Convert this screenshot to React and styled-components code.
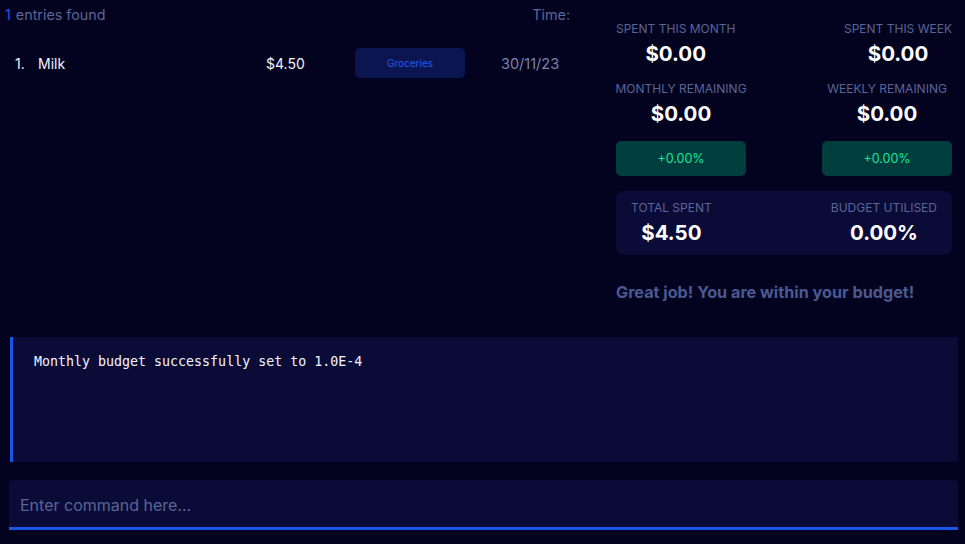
import React from "react";
import styled, { createGlobalStyle } from "styled-components";

const GlobalStyle = createGlobalStyle`
    html, body {
        margin: 0;
        padding: 0;
        background-color: #03031f;
        font-family: Inter, "Noto Sans", sans-serif;
    }
`

const Page = styled.div`
    display: flex;
    flex-direction: column;
    height: 544px;
    width: 965px;
    background-color: #03031f;
    overflow: hidden;
`

const Top = styled.div`
    display: flex;
    height: 337px;
`

/* left list */
const ListPanel = styled.div`
    width: 616px;
    display: flex;
    flex-direction: column;
`

const ListHeader = styled.div`
    display: flex;
    justify-content: space-between;
    width: 565px;
    padding: 5px 0 0 5px;
    font-size: 14.3px;
    line-height: 20px;
    color: #5a6597;
`

const Count = styled.span`
    color: #1f55e0;
    margin-right: 1px;
`

const Row = styled.div`
    display: flex;
    align-items: center;
    height: 30px;
    margin-top: 23px;
    padding-left: 15px;
    font-size: 14px;
    color: #f2f2ff;
`

const Index = styled.div`
    width: 23px;
`

const Name = styled.div`
    width: 228px;
`

const Price = styled.div`
    width: 89px;
`

const Tag = styled.div`
    width: 110px;
    height: 30px;
    display: flex;
    align-items: center;
    justify-content: center;
    border-radius: 5px;
    background-color: #0b1650;
    color: #2459e8;
    font-size: 10px;
`

const Date = styled.div`
    margin-left: 36px;
    color: #7a82ad;
    font-size: 14.5px;
`

/* right stats */
const StatsPanel = styled.div`
    width: 336px;
    padding-top: 21px;
    display: flex;
    flex-direction: column;
`

const StatRow = styled.div`
    display: flex;
    justify-content: space-between;
    margin-top: ${(p) => p.gap || 0}px;
`

const Stat = styled.div`
    display: flex;
    flex-direction: column;
    align-items: center;
    width: ${(p) => (p.w ? p.w + "px" : "auto")};
`

const Label = styled.div`
    font-size: 12px;
    line-height: 16px;
    color: #5a6597;
    text-transform: uppercase;
    white-space: nowrap;
`

const Value = styled.div`
    font-size: 20.5px;
    line-height: 24px;
    font-weight: 700;
    color: #ffffff;
    margin-top: 5px;
`

const Change = styled.div`
    width: 130px;
    height: 35px;
    display: flex;
    align-items: center;
    justify-content: center;
    border-radius: 5px;
    background-color: #003d3d;
    color: #19e39a;
    font-size: 12.5px;
`

const TotalBox = styled.div`
    display: flex;
    justify-content: space-between;
    margin-top: 15px;
    padding: 9px 15px 10px 15px;
    border-radius: 8px;
    background-color: #0b0b38;
`

const Praise = styled.div`
    margin-top: 26px;
    font-size: 16.2px;
    line-height: 22px;
    font-weight: 700;
    color: #4b5993;
`

/* bottom */
const ResultBox = styled.div`
    margin: 0 7px 0 10px;
    height: 125px;
    box-sizing: border-box;
    border-left: 3px solid #1a55e6;
    background-color: #0b0b38;
    padding: 16px 0 0 21px;
    font-family: "DejaVu Sans Mono", "Liberation Mono", monospace;
    font-size: 13.3px;
    line-height: 18px;
    color: #f4f4ff;
`

const CommandBox = styled.div`
    margin: 18px 7px 0 9px;
    height: 50px;
    box-sizing: border-box;
    display: flex;
    align-items: center;
    padding: 2px 11px 0 11px;
    border-radius: 4px 4px 0 0;
    border-bottom: 3px solid #1a55e6;
    background-color: #0b0b38;
`

const CommandInput = styled.input`
    flex: 1;
    border: none;
    outline: none;
    background: transparent;
    font-family: Inter, "Noto Sans", sans-serif;
    font-size: 16px;
    color: #ffffff;
    padding: 0;

    &::placeholder {
        color: #5a6597;
    }
`

const App = () => {
    return (
        <Page>
            <GlobalStyle />
            <Top>
                <ListPanel>
                    <ListHeader>
                        <span><Count>1</Count> entries found</span>
                        <span>Time:</span>
                    </ListHeader>
                    <Row>
                        <Index>1.</Index>
                        <Name>Milk</Name>
                        <Price>$4.50</Price>
                        <Tag>Groceries</Tag>
                        <Date>30/11/23</Date>
                    </Row>
                </ListPanel>
                <StatsPanel>
                    <StatRow>
                        <Stat>
                            <Label>Spent this month</Label>
                            <Value>$0.00</Value>
                        </Stat>
                        <Stat>
                            <Label>Spent this week</Label>
                            <Value>$0.00</Value>
                        </Stat>
                    </StatRow>
                    <StatRow gap={15}>
                        <Stat w={130}>
                            <Label>Monthly remaining</Label>
                            <Value>$0.00</Value>
                        </Stat>
                        <Stat w={130}>
                            <Label>Weekly remaining</Label>
                            <Value>$0.00</Value>
                        </Stat>
                    </StatRow>
                    <StatRow gap={15}>
                        <Change>+0.00%</Change>
                        <Change>+0.00%</Change>
                    </StatRow>
                    <TotalBox>
                        <Stat>
                            <Label>Total spent</Label>
                            <Value>$4.50</Value>
                        </Stat>
                        <Stat>
                            <Label>Budget utilised</Label>
                            <Value>0.00%</Value>
                        </Stat>
                    </TotalBox>
                    <Praise>Great job! You are within your budget!</Praise>
                </StatsPanel>
            </Top>
            <ResultBox>Monthly budget successfully set to 1.0E-4</ResultBox>
            <CommandBox>
                <CommandInput placeholder="Enter command here..." />
            </CommandBox>
        </Page>
    );
}

export default App;
